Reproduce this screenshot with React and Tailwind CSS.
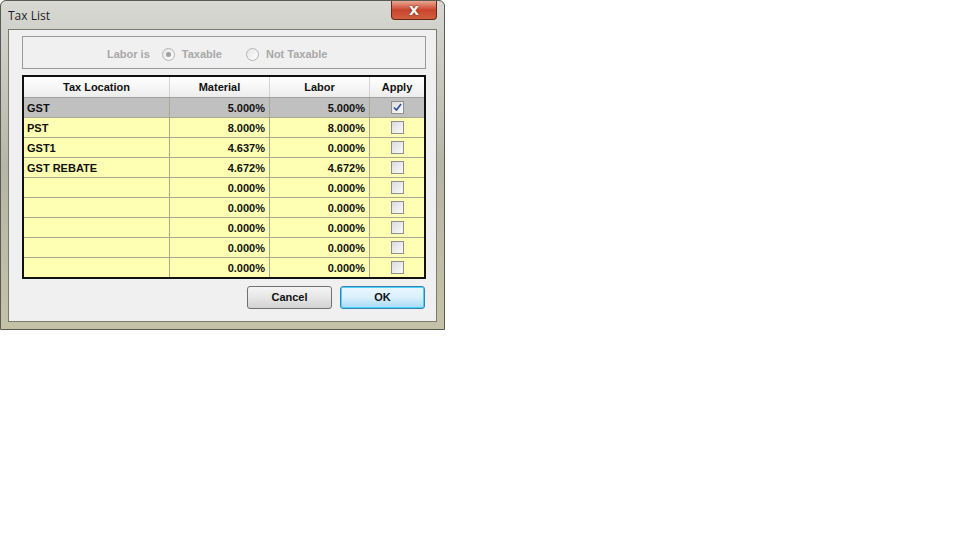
const rows = [
  { name: 'GST', material: '5.000%', labor: '5.000%', apply: true, selected: true },
  { name: 'PST', material: '8.000%', labor: '8.000%', apply: false },
  { name: 'GST1', material: '4.637%', labor: '0.000%', apply: false },
  { name: 'GST REBATE', material: '4.672%', labor: '4.672%', apply: false },
  { name: '', material: '0.000%', labor: '0.000%', apply: false },
  { name: '', material: '0.000%', labor: '0.000%', apply: false },
  { name: '', material: '0.000%', labor: '0.000%', apply: false },
  { name: '', material: '0.000%', labor: '0.000%', apply: false },
  { name: '', material: '0.000%', labor: '0.000%', apply: false },
]

function CheckBox({ checked }) {
  return (
    <div className="flex h-[13px] w-[13px] items-center justify-center border border-[#8f8f8f] bg-gradient-to-br from-[#dcdcdc] to-[#fafafa]">
      {checked && (
        <svg width="9" height="9" viewBox="0 0 9 9">
          <path d="M1 4.5 L3.5 7 L8 1" fill="none" stroke="#2a4f9c" strokeWidth="1.6" />
        </svg>
      )}
    </div>
  )
}

function Radio({ checked }) {
  return (
    <div className="flex h-[13px] w-[13px] items-center justify-center rounded-full border border-[#b4b4b4] bg-gradient-to-br from-[#e6e6e6] to-[#fcfcfc]">
      {checked && <div className="h-[5px] w-[5px] rounded-full bg-[#a0a0a0]" />}
    </div>
  )
}

export default function App() {
  return (
    <div className="h-[540px] w-[960px] bg-white font-['Liberation_Sans',Arial,sans-serif]">
      {/* window frame */}
      <div className="flex h-[330px] w-[445px] flex-col rounded-t-[6px] border border-[#5a5a50] bg-gradient-to-b from-[#d8d8d4] via-[#b6b6a8] to-[#c4c2a6]">
        {/* title bar */}
        <div className="flex h-[28px] items-start justify-between pl-[7px] pr-[7px]">
          <span className="pt-[6px] font-['Open_Sans',sans-serif] text-[12px] text-[#1e1e1e]">Tax List</span>
          <div className="flex h-[19px] w-[46px] items-center justify-center rounded-b-[4px] border border-t-0 border-[#6b2418] bg-gradient-to-b from-[#e8a593] via-[#c8442c] to-[#d0603f]">
            <span className="font-['DejaVu_Sans',sans-serif] text-[13px] font-bold leading-none text-white [text-shadow:0_0_2px_#5a1a10]">X</span>
          </div>
        </div>
        {/* client area */}
        <div className="mx-[7px] mb-[7px] flex flex-1 flex-col border border-[#7a7a6c] bg-[#f0f0f0] pl-[13px] pr-[10px] pt-[6px]">
          {/* group box */}
          <div className="flex h-[33px] items-center border border-[#9a9a9a] pl-[84px] pt-[3px] text-[11px] font-bold text-[#a8a8a8]">
            <span className="mr-[12px]">Labor is</span>
            <Radio checked />
            <span className="ml-[7px] mr-[24px]">Taxable</span>
            <Radio />
            <span className="ml-[7px]">Not Taxable</span>
          </div>
          {/* table */}
          <div className="mt-[6px] border-2 border-[#111] text-[11px] font-bold text-[#111]">
            <div className="grid h-[21px] grid-cols-[146px_100px_100px_1fr] border-b border-[#a0a0a0] bg-gradient-to-b from-white to-[#ededed]">
              <div className="flex items-center justify-center border-r border-[#d4d4d4]">Tax Location</div>
              <div className="flex items-center justify-center border-r border-[#d4d4d4]">Material</div>
              <div className="flex items-center justify-center border-r border-[#d4d4d4]">Labor</div>
              <div className="flex items-center justify-center">Apply</div>
            </div>
            {rows.map((r, i) => (
              <div
                key={i}
                className={`grid grid-cols-[146px_100px_100px_1fr] ${i < rows.length - 1 ? 'h-[20px] border-b' : 'h-[19px]'} border-[#a8a890] ${r.selected ? 'bg-[#c0c0c0]' : 'bg-[#ffffb4]'}`}
              >
                <div className="flex items-center border-r border-[#a8a890] pl-[3px] pt-[1px]">{r.name}</div>
                <div className="flex items-center justify-end border-r border-[#a8a890] pr-[4px] pt-[1px]">{r.material}</div>
                <div className="flex items-center justify-end border-r border-[#a8a890] pr-[4px] pt-[1px]">{r.labor}</div>
                <div className="flex items-center justify-center">
                  <CheckBox checked={r.apply} />
                </div>
              </div>
            ))}
          </div>
          {/* buttons */}
          <div className="mt-[7px] flex justify-end gap-[8px] pr-[1px] text-[11px] font-bold text-[#111]">
            <button className="h-[23px] w-[85px] rounded-[3px] border border-[#707070] bg-gradient-to-b from-[#f4f4f4] via-[#e6e6e6] to-[#d2d2d2]">
              Cancel
            </button>
            <button className="h-[23px] w-[85px] rounded-[3px] border border-[#3c7fb1] bg-gradient-to-b from-[#eaf6fd] via-[#d9f0fc] to-[#a7d9f5] shadow-[inset_0_0_0_1px_#48d3fc]">
              OK
            </button>
          </div>
        </div>
      </div>
    </div>
  )
}
